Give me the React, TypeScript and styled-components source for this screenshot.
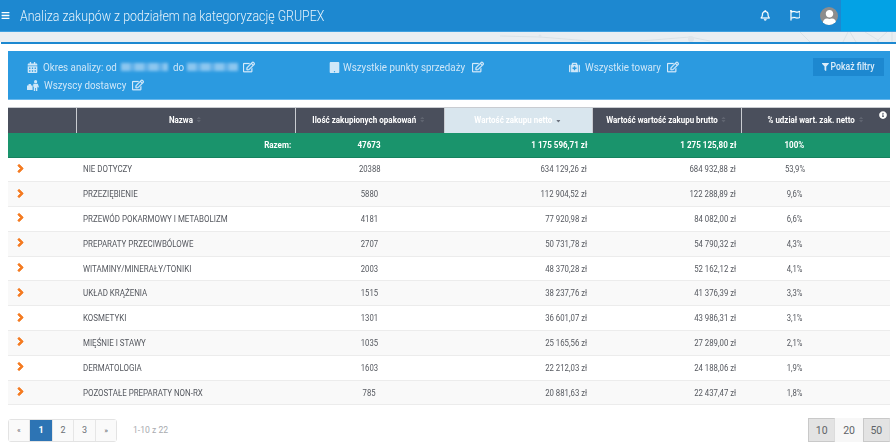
import React from "react";
import styled, { createGlobalStyle } from "styled-components";
import {
  FaBars,
  FaCalendarAlt,
  FaTablet,
  FaMedkit,
  FaRegEdit,
  FaFilter,
  FaRegBell,
  FaRegFlag,
  FaUser,
  FaAngleRight,
  FaInfoCircle,
  FaSort,
  FaSortDown,
} from "react-icons/fa";

const GlobalStyle = createGlobalStyle`
  html, body {
    margin: 0;
    padding: 0;
    background: #ffffff;
    font-family: Roboto, "Liberation Sans", sans-serif;
    overflow: hidden;
  }
`;

const Page = styled.div`
  width: 896px;
  height: 446px;
  display: flex;
  flex-direction: column;
  overflow: hidden;
`;

const Header = styled.header`
  height: 32px;
  flex: none;
  display: flex;
  align-items: center;
  background: #1d88d0;
  border-bottom: 1px solid #3ea0e0;
  box-sizing: border-box;
  color: #fff;
`;

const Burger = styled.span`
  display: flex;
  width: 20px;
  padding-left: 1px;
  box-sizing: border-box;
  font-size: 9px;
`;

const Title = styled.h1`
  margin: 0;
  flex: 1;
  font-size: 14px;
  font-weight: 300;
  white-space: nowrap;
  color: #e6f3fb;
  transform: scaleX(0.884);
  transform-origin: left center;
`;

const HeaderIcons = styled.div`
  display: flex;
  align-items: center;
  height: 100%;
`;

const HeaderIcon = styled.span`
  display: flex;
  width: 30px;
  justify-content: center;
  font-size: 10.5px;
  svg {
    stroke: currentColor;
    stroke-width: 12px;
  }
`;

const Avatar = styled.span`
  width: 18px;
  height: 18px;
  margin: 0 3px 0 10px;
  border-radius: 50%;
  background: #8d8d8d;
  color: #fff;
  overflow: hidden;
  display: flex;
  align-items: flex-end;
  justify-content: center;
  font-size: 15px;
`;

const AccentBlock = styled.div`
  width: 55px;
  height: 100%;
  background: #03a2e5;
`;

const Strip = styled.div`
  height: 10px;
  flex: none;
  background: #e9eef2;
  display: flex;
  svg {
    width: 100%;
    height: 100%;
  }
`;

const Content = styled.main`
  flex: 1;
  margin-left: 1px;
  border-top: 2px solid #1d88d0;
  padding: 7px 6px 0 7px;
  background: #fff;
`;

const FilterPanel = styled.section`
  height: 49px;
  box-sizing: border-box;
  background: #2b9ae0;
  border-bottom: 1px solid #6ab8ec;
  padding: 7px 6px 0 19px;
  display: grid;
  grid-template-columns: 302px 240px 1fr auto;
  grid-auto-rows: 18px;
  align-items: center;
  color: #cfe7f8;
  font-size: 11px;
`;

const FilterItem = styled.div`
  display: flex;
  align-items: center;
  white-space: nowrap;
  svg {
    flex: none;
  }
  & > svg:first-child {
    margin-right: 5px;
  }
`;

const TabletIcon = styled(FaTablet)`
  font-size: 11px;
  &&& {
    margin-right: 3px;
  }
`;

// tekst w oryginale jest zwezony, szerokosc podana recznie
const Label = styled.span<{ $w: number }>`
  display: inline-block;
  width: ${(p) => p.$w}px;
  transform: scaleX(0.89);
  transform-origin: left center;
`;

const Blurred = styled.span<{ $w: number; $after: number }>`
  display: inline-block;
  width: ${(p) => p.$w}px;
  height: 8px;
  margin: 0 ${(p) => p.$after}px 0 3px;
  background: repeating-linear-gradient(90deg, #8cc6ef 0 9px, #62b0e8 9px 14px);
  filter: blur(1.5px);
`;

const EditIcon = styled(FaRegEdit)<{ $gap?: number }>`
  font-size: 12px;
  margin-left: ${(p) => p.$gap ?? 6}px;
  color: #d6eafa;
  stroke: currentColor;
  stroke-width: 12px;
`;

const FilterButton = styled.button`
  height: 18px;
  width: 71px;
  padding: 0;
  border: 0;
  background: #1d88d0;
  color: #dcedf9;
  font: 500 10px Roboto, sans-serif;
  display: flex;
  align-items: center;
  justify-content: center;
  gap: 2px;
  margin-top: -1px;
`;

const ButtonInner = styled.span`
  display: inline-flex;
  align-items: center;
  gap: 2px;
  white-space: nowrap;
  transform: scaleX(0.87);
`;

const Table = styled.table`
  margin-top: 7px;
  width: 882px;
  border-collapse: collapse;
  table-layout: fixed;
  font-size: 8.4px;
  color: #55585f;
`;

const HeadCell = styled.th<{ $active?: boolean }>`
  position: relative;
  height: 25px;
  padding: 0;
  box-sizing: border-box;
  background: ${(p) => (p.$active ? "#d9e6ee" : "#4a4f5c")};
  color: #fff;
  font-size: 8.4px;
  font-weight: 700;
  text-align: center;
  white-space: nowrap;
  border-left: 1px solid #c9ccd1;
  border-top: 1px solid #c9ccd1;
  &:first-child {
    border-left: 0;
  }
`;

const Squeeze = styled.span<{ $x: number; $origin?: string }>`
  display: inline-block;
  transform: scaleX(${(p) => p.$x});
  transform-origin: ${(p) => p.$origin ?? "center"} center;
`;

const SortMark = styled.span<{ $active?: boolean }>`
  display: inline-block;
  vertical-align: middle;
  margin-left: 3px;
  font-size: 7px;
  line-height: 1;
  color: ${(p) => (p.$active ? "#6d7480" : "#5f6470")};
`;

const InfoMark = styled.span`
  position: absolute;
  right: 3px;
  top: 3px;
  font-size: 8px;
  line-height: 1;
  color: #fff;
`;

const TotalRow = styled.tr`
  height: 24.5px;
  background: #1a946c;
  color: #fff;
  font-weight: 700;
  border-bottom: 1px solid #16825f;
`;

const Row = styled.tr`
  height: 24.8px;
  border-bottom: 1px solid #ececec;
  &:nth-child(even) {
    background: #fff;
  }
  &:nth-child(odd) {
    background: #f9f9f9;
  }
`;

const Cell = styled.td<{ $align?: string; $pad?: number }>`
  padding: 0 ${(p) => p.$pad ?? 0}px 0 ${(p) => (p.$align === "left" ? 7 : 0)}px;
  text-align: ${(p) => p.$align ?? "center"};
  white-space: nowrap;
`;

const ShareCell = styled.td`
  padding: 0 42px 0 0;
  text-align: center;
  white-space: nowrap;
`;

const ChevronCell = styled.td`
  padding: 0;
`;

const Chevron = styled(FaAngleRight)`
  display: block;
  margin: -2px 0 0 6px;
  font-size: 13px;
  color: #f47a20;
  stroke: #f47a20;
  stroke-width: 30px;
`;

const Footer = styled.footer`
  display: flex;
  align-items: center;
  height: 24px;
  margin-top: 13px;
`;

const Pagination = styled.nav`
  display: flex;
  height: 23px;
  border: 1px solid #e3e3e3;
  border-radius: 3px;
  box-sizing: border-box;
`;

const PageLink = styled.span<{ $active?: boolean; $w: number; $small?: boolean }>`
  width: ${(p) => p.$w}px;
  box-sizing: border-box;
  display: flex;
  align-items: center;
  justify-content: center;
  background: ${(p) => (p.$active ? "#2d74b4" : "#fafafa")};
  color: ${(p) => (p.$active ? "#fff" : "#6b6f76")};
  font-size: ${(p) => (p.$small ? 8 : 9)}px;
  font-weight: ${(p) => (p.$active ? 700 : 400)};
  & + & {
    border-left: 1px solid #e6e6e6;
  }
`;

const PageInfo = styled.span`
  margin-left: 16px;
  flex: 1;
  color: #a9abb0;
  font-size: 8.6px;
`;

const SizeGroup = styled.div`
  display: flex;
  height: 24px;
`;

const SizeButton = styled.span<{ $on: boolean }>`
  width: 27.3px;
  display: flex;
  align-items: center;
  justify-content: center;
  box-sizing: border-box;
  font-size: 10.5px;
  color: #5f6368;
  background: ${(p) => (p.$on ? "#e3e3e3" : "#f7f7f7")};
  border: ${(p) => (p.$on ? "1px solid #c9c9c9" : "0")};
  border-right-color: #dcdcdc;
`;

const rows = [
  ["NIE DOTYCZY", "20388", "634 129,26 zł", "684 932,88 zł", "53,9%"],
  ["PRZEZIĘBIENIE", "5880", "112 904,52 zł", "122 288,89 zł", "9,6%"],
  ["PRZEWÓD POKARMOWY I METABOLIZM", "4181", "77 920,98 zł", "84 082,00 zł", "6,6%"],
  ["PREPARATY PRZECIWBÓLOWE", "2707", "50 731,78 zł", "54 790,32 zł", "4,3%"],
  ["WITAMINY/MINERAŁY/TONIKI", "2003", "48 370,28 zł", "52 162,12 zł", "4,1%"],
  ["UKŁAD KRĄŻENIA", "1515", "38 237,76 zł", "41 376,39 zł", "3,3%"],
  ["KOSMETYKI", "1301", "36 601,07 zł", "43 986,31 zł", "3,1%"],
  ["MIĘŚNIE I STAWY", "1035", "25 165,56 zł", "27 289,00 zł", "2,1%"],
  ["DERMATOLOGIA", "1603", "22 212,03 zł", "24 188,06 zł", "1,9%"],
  ["POZOSTAŁE PREPARATY NON-RX", "785", "20 881,63 zł", "22 437,47 zł", "1,8%"],
];

const columns = [68, 219, 149, 148, 149, 149];

const SupplierIcon = () => (
  <svg width="12" height="11" viewBox="0 0 12 11" fill="currentColor">
    <circle cx="8.6" cy="1.7" r="1.6" />
    <path d="M6.4 3.8h4.4l1.2 3.4-1.2.3-.5-1.3V11H9V8H8.2v3H6.8V6.2L6 6.9z" />
    <path d="M0 5.6h1.4V5c0-.6.5-1 1-1h.8c.5 0 1 .4 1 1v.6h1.4V10H0z" />
  </svg>
);

export default function App() {
  return (
    <Page>
      <GlobalStyle />
      <Header>
        <Burger><FaBars /></Burger>
        <Title>Analiza zakupów z podziałem na kategoryzację GRUPEX</Title>
        <HeaderIcons>
          <HeaderIcon><FaRegBell /></HeaderIcon>
          <HeaderIcon><FaRegFlag /></HeaderIcon>
          <Avatar><FaUser /></Avatar>
          <AccentBlock />
        </HeaderIcons>
      </Header>
      <Strip>
        <svg viewBox="0 0 896 10" fill="none" stroke="#d3dce3" strokeWidth="0.7">
          <path d="M800 0l10 10M843 10l5-10M850 0l6 10M865 0l13 8 9-8M878 8v2M892 0v10M500 4l40 1 50 4M640 9l50-4 20 4" />
          <circle cx="540" cy="4" r="1.5" fill="#dfe5ea" stroke="none" />
          <circle cx="691" cy="7" r="3" fill="#dfe5ea" stroke="none" />
        </svg>
      </Strip>
      <Content>
        <FilterPanel>
          <FilterItem>
            <FaCalendarAlt />
            <Label $w={75}>Okres analizy: od</Label>
            <Blurred $w={47} $after={5} />
            <Label $w={11}>do</Label>
            <Blurred $w={51} $after={0} />
            <EditIcon $gap={5} />
          </FilterItem>
          <FilterItem>
            <TabletIcon />
            <Label $w={123}>Wszystkie punkty sprzedaży</Label>
            <EditIcon />
          </FilterItem>
          <FilterItem>
            <FaMedkit />
            <Label $w={76}>Wszystkie towary</Label>
            <EditIcon />
          </FilterItem>
          <FilterButton>
            <ButtonInner>
              <FaFilter size={8} />
              Pokaż filtry
            </ButtonInner>
          </FilterButton>
          <FilterItem>
            <SupplierIcon />
            <Label $w={82}>Wszyscy dostawcy</Label>
            <EditIcon />
          </FilterItem>
        </FilterPanel>
        <Table>
          <colgroup>
            {columns.map((w, i) => (
              <col key={i} style={{ width: w }} />
            ))}
          </colgroup>
          <thead>
            <tr>
              <HeadCell />
              <HeadCell><Squeeze $x={0.95}>Nazwa<SortMark><FaSort /></SortMark></Squeeze></HeadCell>
              <HeadCell><Squeeze $x={0.96}>Ilość zakupionych opakowań<SortMark><FaSort /></SortMark></Squeeze></HeadCell>
              <HeadCell $active><Squeeze $x={0.95}>Wartość zakupu netto<SortMark $active><FaSortDown /></SortMark></Squeeze></HeadCell>
              <HeadCell><Squeeze $x={0.95}>Wartość wartość zakupu brutto<SortMark><FaSort /></SortMark></Squeeze></HeadCell>
              <HeadCell>
                <Squeeze $x={0.95}>% udział wart. zak. netto<SortMark><FaSort /></SortMark></Squeeze>
                <InfoMark><FaInfoCircle /></InfoMark>
              </HeadCell>
            </tr>
          </thead>
          <tbody>
            <TotalRow>
              <Cell />
              <Cell $align="right" $pad={4}><Squeeze $x={0.96} $origin="right">Razem:</Squeeze></Cell>
              <Cell><Squeeze $x={0.96}>47673</Squeeze></Cell>
              <Cell $align="right" $pad={5}><Squeeze $x={0.96} $origin="right">1 175 596,71 zł</Squeeze></Cell>
              <Cell $align="right" $pad={5}><Squeeze $x={0.96} $origin="right">1 275 125,80 zł</Squeeze></Cell>
              <ShareCell><Squeeze $x={0.96}>100%</Squeeze></ShareCell>
            </TotalRow>
            {rows.map((r) => (
              <Row key={r[0]}>
                <ChevronCell><Chevron /></ChevronCell>
                <Cell $align="left"><Squeeze $x={0.95} $origin="left">{r[0]}</Squeeze></Cell>
                <Cell><Squeeze $x={0.92}>{r[1]}</Squeeze></Cell>
                <Cell $align="right" $pad={5}><Squeeze $x={0.93} $origin="right">{r[2]}</Squeeze></Cell>
                <Cell $align="right" $pad={5}><Squeeze $x={0.93} $origin="right">{r[3]}</Squeeze></Cell>
                <ShareCell><Squeeze $x={0.92}>{r[4]}</Squeeze></ShareCell>
              </Row>
            ))}
          </tbody>
        </Table>
        <Footer>
          <Pagination>
            <PageLink $w={20} $small>«</PageLink>
            <PageLink $w={23} $active>1</PageLink>
            <PageLink $w={21}>2</PageLink>
            <PageLink $w={22}>3</PageLink>
            <PageLink $w={21} $small>»</PageLink>
          </Pagination>
          <PageInfo>1-10 z 22</PageInfo>
          <SizeGroup>
            <SizeButton $on>10</SizeButton>
            <SizeButton $on={false}>20</SizeButton>
            <SizeButton $on>50</SizeButton>
          </SizeGroup>
        </Footer>
      </Content>
    </Page>
  );
}
